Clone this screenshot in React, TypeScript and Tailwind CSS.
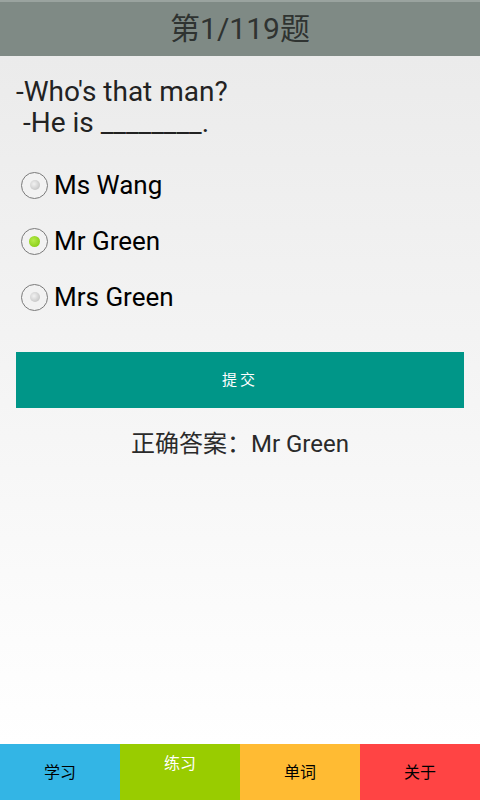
import { useState } from 'react'

const options = ['Ms Wang', 'Mr Green', 'Mrs Green']

const tabs = [
  { label: '学习', bg: 'bg-[#33b5e5]', text: 'text-black', active: false },
  { label: '练习', bg: 'bg-[#99cc00]', text: 'text-white', active: true },
  { label: '单词', bg: 'bg-[#ffbb33]', text: 'text-black', active: false },
  { label: '关于', bg: 'bg-[#ff4444]', text: 'text-black', active: false },
]

function Radio({ checked }: { checked: boolean }) {
  return (
    <span className="flex h-[27px] w-[27px] shrink-0 items-center justify-center rounded-full border-[1.5px] border-[#7a7a7a] bg-[#f2f2f2]">
      {checked ? (
        <span className="h-[11px] w-[11px] rounded-full bg-[radial-gradient(circle_at_40%_40%,#b6ec4a,#7cc40a)]" />
      ) : (
        <span className="h-[10px] w-[10px] rounded-full bg-[radial-gradient(circle_at_40%_40%,#f2f2f2,#b8b8b8)]" />
      )}
    </span>
  )
}

export default function App() {
  const [selected, setSelected] = useState(1)

  return (
    <div className="flex h-[800px] w-[480px] flex-col font-['Roboto','Noto_Sans_CJK_SC',sans-serif]">
      {/* Title bar */}
      <div className="flex h-[56px] shrink-0 items-center justify-center border-t-2 border-[#9aa39f] bg-[#7f8a85]">
        <span className="text-[30px] leading-none text-[#2f3331]">第1/119题</span>
      </div>

      <div className="flex flex-1 flex-col bg-gradient-to-b from-[#ebebeb] to-white">
        {/* Question */}
        <div className="px-4 pt-[20px] text-[28px] leading-[31px] text-[#222]">
          <p>-Who's that man?</p>
          <p>&nbsp;-He is ________.</p>
        </div>

        {/* Options */}
        <div className="mt-[33px] flex flex-col gap-[28px] pl-[21px]">
          {options.map((opt, i) => (
            <button
              key={opt}
              onClick={() => setSelected(i)}
              className="flex h-[28px] items-center gap-[6px] text-left text-[26px] text-black"
            >
              <Radio checked={selected === i} />
              <span>{opt}</span>
            </button>
          ))}
        </div>

        {/* Submit */}
        <div className="mt-[41px] px-4">
          <button className="flex h-[56px] w-full items-center justify-center bg-[#009688] text-[15px] tracking-[3px] text-white">
            提交
          </button>
        </div>

        <p className="mt-[18px] text-center text-[24px] text-[#2a2a2a]">正确答案：Mr Green</p>
      </div>

      {/* Bottom tabs */}
      <div className="grid h-[56px] shrink-0 grid-cols-4">
        {tabs.map(t => (
          <div
            key={t.label}
            className={`flex justify-center ${t.bg} ${t.text} ${t.active ? 'items-start pt-[8px]' : 'items-center pt-[2px]'} text-[16px]`}
          >
            {t.label}
          </div>
        ))}
      </div>
    </div>
  )
}
